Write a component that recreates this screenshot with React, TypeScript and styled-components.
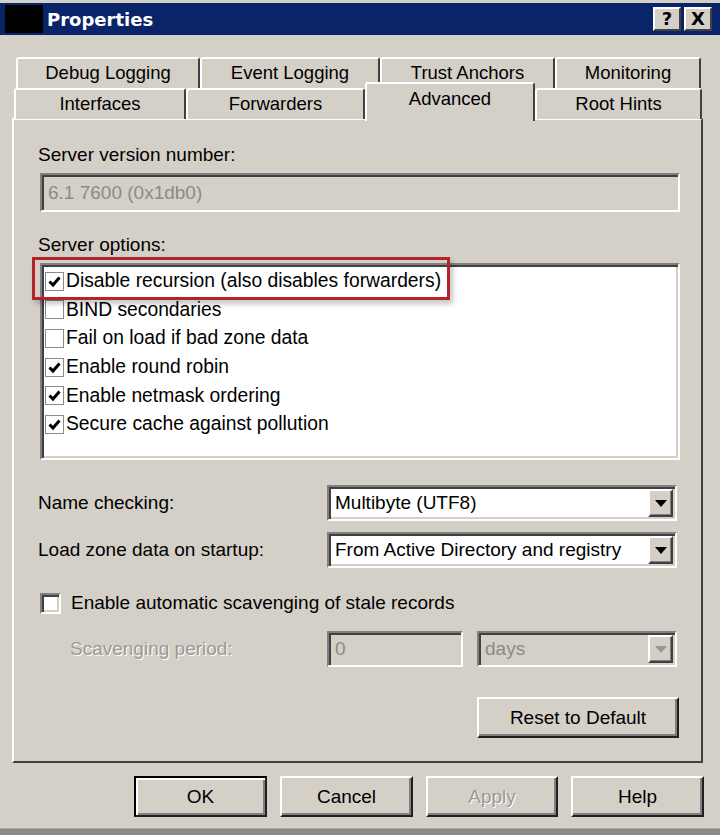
import React from 'react';
import styled, { createGlobalStyle } from 'styled-components';

const GlobalStyle = createGlobalStyle`
    html, body {
        margin: 0;
        padding: 0;
        background: #d4d0c8;
    }
    body {
        font-family: "Liberation Sans", Arial, sans-serif;
        font-size: 19px;
        color: #000;
    }
`;

const Window = styled.div`
    width: 720px;
    height: 835px;
    background: #d4d0c8;
    display: flex;
    flex-direction: column;
    overflow: hidden;
`;

const TitleBar = styled.div`
    margin-top: 3px;
    height: 32px;
    background: #0a246a;
    display: flex;
    align-items: center;
`;

const TitleIcon = styled.div`
    width: 38px;
    height: 28px;
    margin-left: 5px;
    background: #000;
`;

const TitleText = styled.div`
    margin-left: 4px;
    color: #fff;
    font-family: "DejaVu Sans", "Liberation Sans", sans-serif;
    font-weight: bold;
    font-size: 18px;
`;

const TitleButtons = styled.div`
    margin-left: auto;
    margin-right: 8px;
    display: flex;
    gap: 3px;
`;

const TitleButton = styled.div`
    width: 28px;
    height: 24px;
    box-sizing: border-box;
    background: #d4d0c8;
    border-top: 2px solid #fff;
    border-left: 2px solid #fff;
    border-right: 2px solid #404040;
    border-bottom: 2px solid #404040;
    display: flex;
    align-items: center;
    justify-content: center;
    font-family: "DejaVu Sans", sans-serif;
    font-weight: bold;
    font-size: 18px;
    line-height: 1;
`;

const TabStrip = styled.div`
    margin-top: 22px;
    display: flex;
    flex-direction: column;
`;

const TabRow = styled.div<{ $height: number; $left: number }>`
    display: flex;
    align-items: flex-start;
    height: ${p => p.$height}px;
    padding-left: ${p => p.$left}px;
`;

const Tab = styled.div<{ $width: number; $active?: boolean }>`
    position: relative;
    z-index: ${p => (p.$active ? 2 : 1)};
    box-sizing: border-box;
    width: ${p => p.$width}px;
    height: ${p => (p.$active ? 39 : 31)}px;
    margin-top: ${p => (p.$active ? -6 : 0)}px;
    background: #d4d0c8;
    border-top: 2px solid #fff;
    border-left: 2px solid #fff;
    border-right: 2px solid #404040;
    border-radius: 3px 3px 0 0;
    display: flex;
    justify-content: center;
    padding-top: ${p => (p.$active ? 4 : 3)}px;
    font-size: 18.5px;
    white-space: nowrap;
`;

const Panel = styled.div`
    margin-left: 12px;
    width: 691px;
    height: 645px;
    box-sizing: border-box;
    border-top: 2px solid #fff;
    border-left: 2px solid #fff;
    border-right: 2px solid #404040;
    border-bottom: 2px solid #404040;
    padding: 0 22px 0 24px;
    display: flex;
    flex-direction: column;
`;

const Label = styled.div<{ $top: number; $disabled?: boolean }>`
    margin-top: ${p => p.$top}px;
    height: 22px;
    line-height: 22px;
    white-space: nowrap;
    color: ${p => (p.$disabled ? '#9a9892' : '#000')};
    text-shadow: ${p => (p.$disabled ? '1px 1px 0 #fff' : 'none')};
`;

const Sunken = styled.div<{ $width: number; $height: number; $top?: number; $white?: boolean }>`
    box-sizing: border-box;
    width: ${p => p.$width}px;
    height: ${p => p.$height}px;
    margin-top: ${p => p.$top || 0}px;
    background: ${p => (p.$white ? '#fff' : '#d4d0c8')};
    border-top: 2px solid #808080;
    border-left: 2px solid #808080;
    border-right: 2px solid #fff;
    border-bottom: 2px solid #fff;
    box-shadow: inset 2px 2px 0 #404040, inset -2px -2px 0 #d4d0c8;
    flex-shrink: 0;
`;

const FieldText = styled.div<{ $disabled?: boolean }>`
    height: 100%;
    display: flex;
    align-items: center;
    padding-left: 6px;
    white-space: nowrap;
    color: ${p => (p.$disabled ? '#8c8a86' : '#000')};
`;

const ListWrap = styled.div`
    position: relative;
    margin-left: 2px;
    margin-top: 7px;
`;

const List = styled(Sunken)`
    padding: 2px 0 0 3px;
`;

const ListItem = styled.div`
    display: flex;
    align-items: center;
    gap: 2px;
    height: 28.6px;
    font-size: 19.3px;
    white-space: nowrap;
`;

const SmallCheck = styled.div`
    width: 19px;
    height: 19px;
    box-sizing: border-box;
    border: 1px solid #8a8a8a;
    background: #fff;
    display: flex;
    align-items: center;
    justify-content: center;
    flex-shrink: 0;
`;

const Highlight = styled.div`
    position: absolute;
    left: -8px;
    top: -6px;
    width: 418px;
    height: 43px;
    box-sizing: border-box;
    border: 3px solid #b3232a;
    box-shadow: 3px 4px 5px rgba(0, 0, 0, 0.22);
    pointer-events: none;
`;

const FormRow = styled.div<{ $top: number }>`
    display: flex;
    align-items: center;
    margin-top: ${p => p.$top}px;
`;

const RowLabel = styled.div<{ $width: number; $indent?: number; $disabled?: boolean }>`
    width: ${p => p.$width}px;
    margin-left: ${p => p.$indent || 0}px;
    flex-shrink: 0;
    white-space: nowrap;
    color: ${p => (p.$disabled ? '#9a9892' : '#000')};
    text-shadow: ${p => (p.$disabled ? '1px 1px 0 #fff' : 'none')};
`;

const Combo = styled(Sunken)`
    display: flex;
    align-items: stretch;
    padding: 2px;
`;

const ComboText = styled.div<{ $disabled?: boolean }>`
    flex: 1;
    display: flex;
    align-items: center;
    padding-left: 4px;
    white-space: nowrap;
    color: ${p => (p.$disabled ? '#8c8a86' : '#000')};
`;

const DropButton = styled.div`
    width: 25px;
    box-sizing: border-box;
    background: #d4d0c8;
    border-top: 2px solid #fff;
    border-left: 2px solid #fff;
    border-right: 2px solid #404040;
    border-bottom: 2px solid #404040;
    box-shadow: inset -1px -1px 0 #808080;
    display: flex;
    align-items: center;
    justify-content: center;
`;

const BigCheck = styled(Sunken)`
    margin-left: 2px;
    margin-right: 10px;
`;

const Button = styled.div<{ $width: number; $default?: boolean; $disabled?: boolean }>`
    width: ${p => p.$width}px;
    height: 41px;
    box-sizing: border-box;
    background: #d4d0c8;
    border-top: 2px solid ${p => (p.$default ? '#000' : '#fff')};
    border-left: 2px solid ${p => (p.$default ? '#000' : '#fff')};
    border-right: 2px solid #202020;
    border-bottom: 2px solid #202020;
    box-shadow: ${p =>
        p.$default
            ? 'inset 2px 2px 0 #fff, inset -2px -2px 0 #808080'
            : 'inset -2px -2px 0 #808080'};
    display: flex;
    align-items: center;
    justify-content: center;
    white-space: nowrap;
    color: ${p => (p.$disabled ? '#9a9892' : '#000')};
    text-shadow: ${p => (p.$disabled ? '1px 1px 0 #fff' : 'none')};
`;

const ResetRow = styled.div`
    display: flex;
    justify-content: flex-end;
    margin-top: 30px;
`;

const Footer = styled.div`
    display: flex;
    justify-content: flex-end;
    gap: 13px;
    margin-top: 13px;
    padding-right: 16px;
`;

const BottomEdge = styled.div`
    margin-top: auto;
    height: 6px;
    background: #8b8985;
    border-top: 1px solid #a9a6a0;
`;

const CheckMark = () => (
    <svg width="15" height="15" viewBox="0 0 15 15">
        <path d="M2.5 7.5 L6 11 L12.5 3.5" stroke="#000" strokeWidth="3" fill="none" />
    </svg>
);

const Arrow = ({ color }: { color: string }) => (
    <svg width="12" height="7" viewBox="0 0 12 7">
        <path d="M0 0 H12 L6 7 Z" fill={color} />
    </svg>
);

const options = [
    { label: 'Disable recursion (also disables forwarders)', checked: true },
    { label: 'BIND secondaries', checked: false },
    { label: 'Fail on load if bad zone data', checked: false },
    { label: 'Enable round robin', checked: true },
    { label: 'Enable netmask ordering', checked: true },
    { label: 'Secure cache against pollution', checked: true },
];

export default function App() {
    return (
        <Window>
            <GlobalStyle />
            <TitleBar>
                <TitleIcon />
                <TitleText>Properties</TitleText>
                <TitleButtons>
                    <TitleButton>?</TitleButton>
                    <TitleButton>X</TitleButton>
                </TitleButtons>
            </TitleBar>

            <TabStrip>
                <TabRow $height={31} $left={16}>
                    <Tab $width={184}>Debug Logging</Tab>
                    <Tab $width={180}>Event Logging</Tab>
                    <Tab $width={175}>Trust Anchors</Tab>
                    <Tab $width={146}>Monitoring</Tab>
                </TabRow>
                <TabRow $height={30} $left={14}>
                    <Tab $width={172}>Interfaces</Tab>
                    <Tab $width={179}>Forwarders</Tab>
                    <Tab $width={170} $active>Advanced</Tab>
                    <Tab $width={167}>Root Hints</Tab>
                </TabRow>
            </TabStrip>

            <Panel>
                <Label $top={24}>Server version number:</Label>
                <Sunken $width={640} $height={39} $top={7} style={{ marginLeft: 2 }}>
                    <FieldText $disabled>6.1 7600 (0x1db0)</FieldText>
                </Sunken>

                <Label $top={22}>Server options:</Label>
                <ListWrap>
                    <List $width={640} $height={197} $white>
                        {options.map(o => (
                            <ListItem key={o.label}>
                                <SmallCheck>{o.checked && <CheckMark />}</SmallCheck>
                                {o.label}
                            </ListItem>
                        ))}
                    </List>
                    <Highlight />
                </ListWrap>

                <FormRow $top={25}>
                    <RowLabel $width={289}>Name checking:</RowLabel>
                    <Combo $width={350} $height={36} $white>
                        <ComboText>Multibyte (UTF8)</ComboText>
                        <DropButton><Arrow color="#000" /></DropButton>
                    </Combo>
                </FormRow>
                <FormRow $top={11}>
                    <RowLabel $width={289}>Load zone data on startup:</RowLabel>
                    <Combo $width={350} $height={36} $white>
                        <ComboText>From Active Directory and registry</ComboText>
                        <DropButton><Arrow color="#000" /></DropButton>
                    </Combo>
                </FormRow>

                <FormRow $top={24}>
                    <BigCheck $width={21} $height={21} $white />
                    Enable automatic scavenging of stale records
                </FormRow>

                <FormRow $top={17}>
                    <RowLabel $width={257} $indent={32} $disabled>Scavenging period:</RowLabel>
                    <Sunken $width={136} $height={36}>
                        <FieldText $disabled>0</FieldText>
                    </Sunken>
                    <Combo $width={200} $height={36} style={{ marginLeft: 14 }}>
                        <ComboText $disabled>days</ComboText>
                        <DropButton><Arrow color="#9a9892" /></DropButton>
                    </Combo>
                </FormRow>

                <ResetRow>
                    <Button $width={202}>Reset to Default</Button>
                </ResetRow>
            </Panel>

            <Footer>
                <Button $width={133} $default>OK</Button>
                <Button $width={133}>Cancel</Button>
                <Button $width={132} $disabled>Apply</Button>
                <Button $width={133}>Help</Button>
            </Footer>
            <BottomEdge />
        </Window>
    );
}
